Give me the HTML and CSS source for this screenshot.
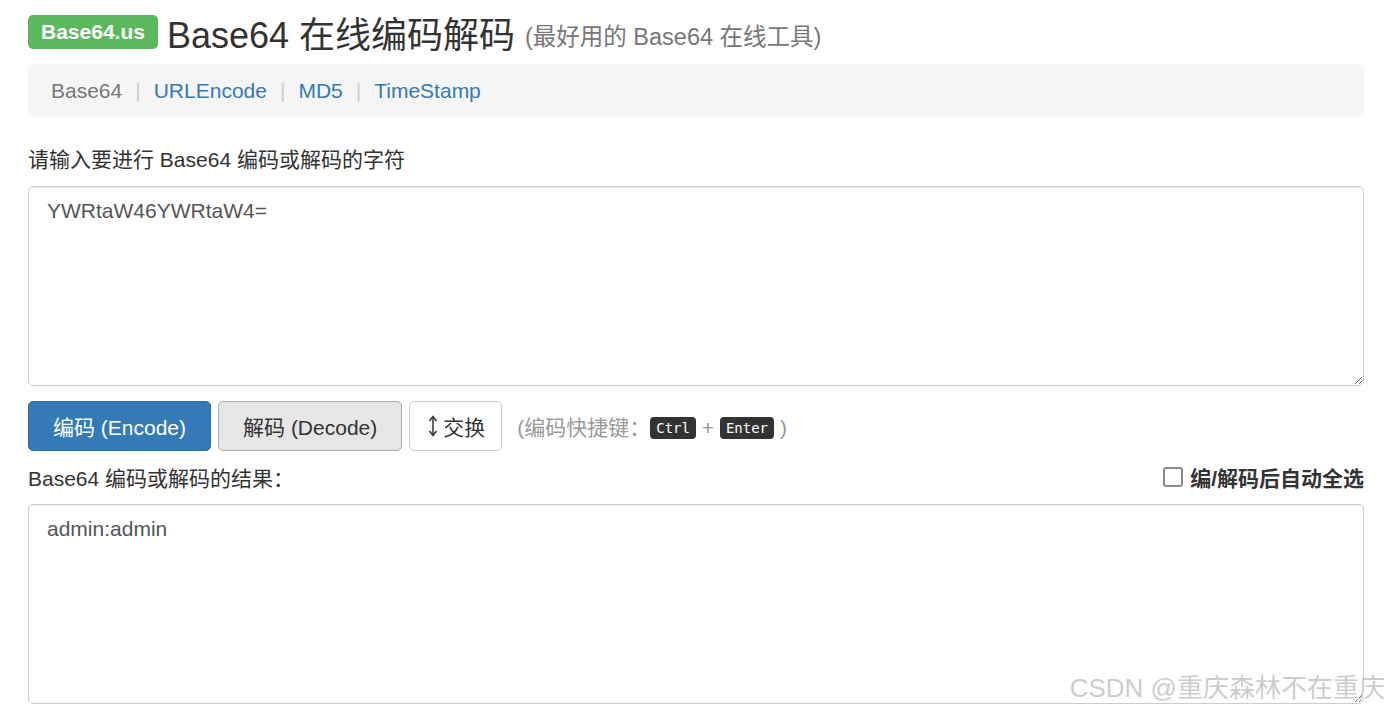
FILE: index.html
```html
<!DOCTYPE html>
<html>
  <head>
    <title>Base64 在线编码解码</title>
    <link rel="stylesheet" href="styles.css">
  </head>

  <body>
    <div class="container">
      <h1 class="page-title">
        <span class="badge">Base64.us</span>
        <span>Base64 在线编码解码</span>
        <small>(最好用的 Base64 在线工具)</small>
      </h1>

      <div class="nav">
        <span class="active">Base64</span>
        <span class="sep">|</span>
        <a href="#">URLEncode</a>
        <span class="sep">|</span>
        <a href="#">MD5</a>
        <span class="sep">|</span>
        <a href="#">TimeStamp</a>
      </div>

      <label class="field-label" for="input">请输入要进行 Base64 编码或解码的字符</label>
      <textarea id="input" class="field">YWRtaW46YWRtaW4=</textarea>

      <div class="actions">
        <button class="btn btn-primary">编码 (Encode)</button>
        <button class="btn btn-pressed">解码 (Decode)</button>
        <button class="btn btn-plain">
          <svg class="swap-icon" width="10" height="22" viewBox="0 0 10 22">
            <path d="M5 2 L5 20" stroke="#333" stroke-width="1.5" fill="none" />
            <path d="M1.5 6 L5 1.5 L8.5 6" stroke="#333" stroke-width="1.5" fill="none" />
            <path d="M1.5 16 L5 20.5 L8.5 16" stroke="#333" stroke-width="1.5" fill="none" />
          </svg>交换
        </button>
        <span class="hint">(编码快捷键：<kbd>Ctrl</kbd> + <kbd>Enter</kbd> )</span>
      </div>

      <div class="result-head">
        <span class="field-label">Base64 编码或解码的结果：</span>
        <label class="auto-select"><span class="checkbox"></span>编/解码后自动全选</label>
      </div>
      <textarea class="field">admin:admin</textarea>
    </div>

    <div class="watermark">CSDN @重庆森林不在重庆</div>
  </body>
</html>
```

FILE: styles.css
```css
body {
  margin: 0;
  font-family: "Liberation Sans", Arial, "Noto Sans CJK SC", sans-serif;
  font-size: 21px;
  color: #333;
  background: #fff;
}

.container {
  width: 1336px;
  margin-left: 28px;
}

.page-title {
  display: flex;
  align-items: center;
  margin: 0;
  padding-top: 12px;
  height: 40px;
  font-size: 36px;
  font-weight: normal;
  color: #333;
}

.page-title small {
  font-size: 23.5px;
  color: #777;
  margin-left: 10px;
  padding-top: 5px;
}

.badge {
  display: inline-block;
  background: #5cb85c;
  color: #fff;
  font-size: 21px;
  font-weight: bold;
  line-height: 24px;
  padding: 5px 13px;
  border-radius: 5px;
  margin-right: 9px;
}

.nav {
  margin-top: 12px;
  height: 53px;
  display: flex;
  align-items: center;
  padding: 0 23px;
  background: #f5f5f5;
  border-radius: 5px;
}

.nav a {
  color: #337ab7;
  text-decoration: none;
}

.nav .active {
  color: #777;
}

.nav .sep {
  color: #ccc;
  padding: 0 13px;
}

.field-label {
  display: block;
  margin-top: 26px;
  margin-bottom: 13px;
  font-size: 21px;
}

.field {
  display: block;
  box-sizing: border-box;
  width: 100%;
  height: 200px;
  margin: 0;
  padding: 12px 18px;
  border: 1px solid #ccc;
  border-radius: 5px;
  font-family: "Liberation Sans", Arial, "Noto Sans CJK SC", sans-serif;
  font-size: 21px;
  color: #555;
  box-shadow: inset 0 1px 1px rgba(0, 0, 0, 0.075);
}

.actions {
  display: flex;
  align-items: center;
  gap: 7px;
  margin-top: 15px;
}

.btn {
  height: 50px;
  padding: 0 24px;
  font-family: "Liberation Sans", Arial, "Noto Sans CJK SC", sans-serif;
  font-size: 21px;
  border-radius: 5px;
  border: 1px solid #ccc;
  cursor: pointer;
  display: flex;
  align-items: center;
}

.btn-primary {
  background: #337ab7;
  border-color: #2e6da4;
  color: #fff;
}

.btn-pressed {
  background: #e6e6e6;
  border-color: #adadad;
  color: #333;
}

.btn-plain {
  background: #fff;
  color: #333;
  padding: 0 16px 0 18px;
}

.swap-icon {
  margin-right: 5px;
}

.hint {
  margin-left: 8px;
  color: #999;
  font-size: 21px;
}

kbd {
  display: inline-block;
  background: #333;
  color: #fff;
  font-family: "DejaVu Sans Mono", monospace;
  font-size: 14px;
  padding: 3px 6px;
  border-radius: 4px;
  vertical-align: 2px;
}

.result-head {
  display: flex;
  justify-content: space-between;
  align-items: center;
  margin-top: 11px;
  margin-bottom: 12px;
}

.result-head .field-label {
  margin: 0;
}

.auto-select {
  display: flex;
  align-items: center;
  font-weight: bold;
  font-size: 21px;
}

.checkbox {
  width: 16px;
  height: 16px;
  border: 2px solid #8a8a8f;
  border-radius: 3px;
  margin-right: 7px;
}

.watermark {
  position: absolute;
  right: 4px;
  top: 667px;
  font-size: 26px;
  color: rgba(160, 160, 160, 0.55);
  text-shadow: 1px 1px 0 rgba(255, 255, 255, 0.8);
}
```
